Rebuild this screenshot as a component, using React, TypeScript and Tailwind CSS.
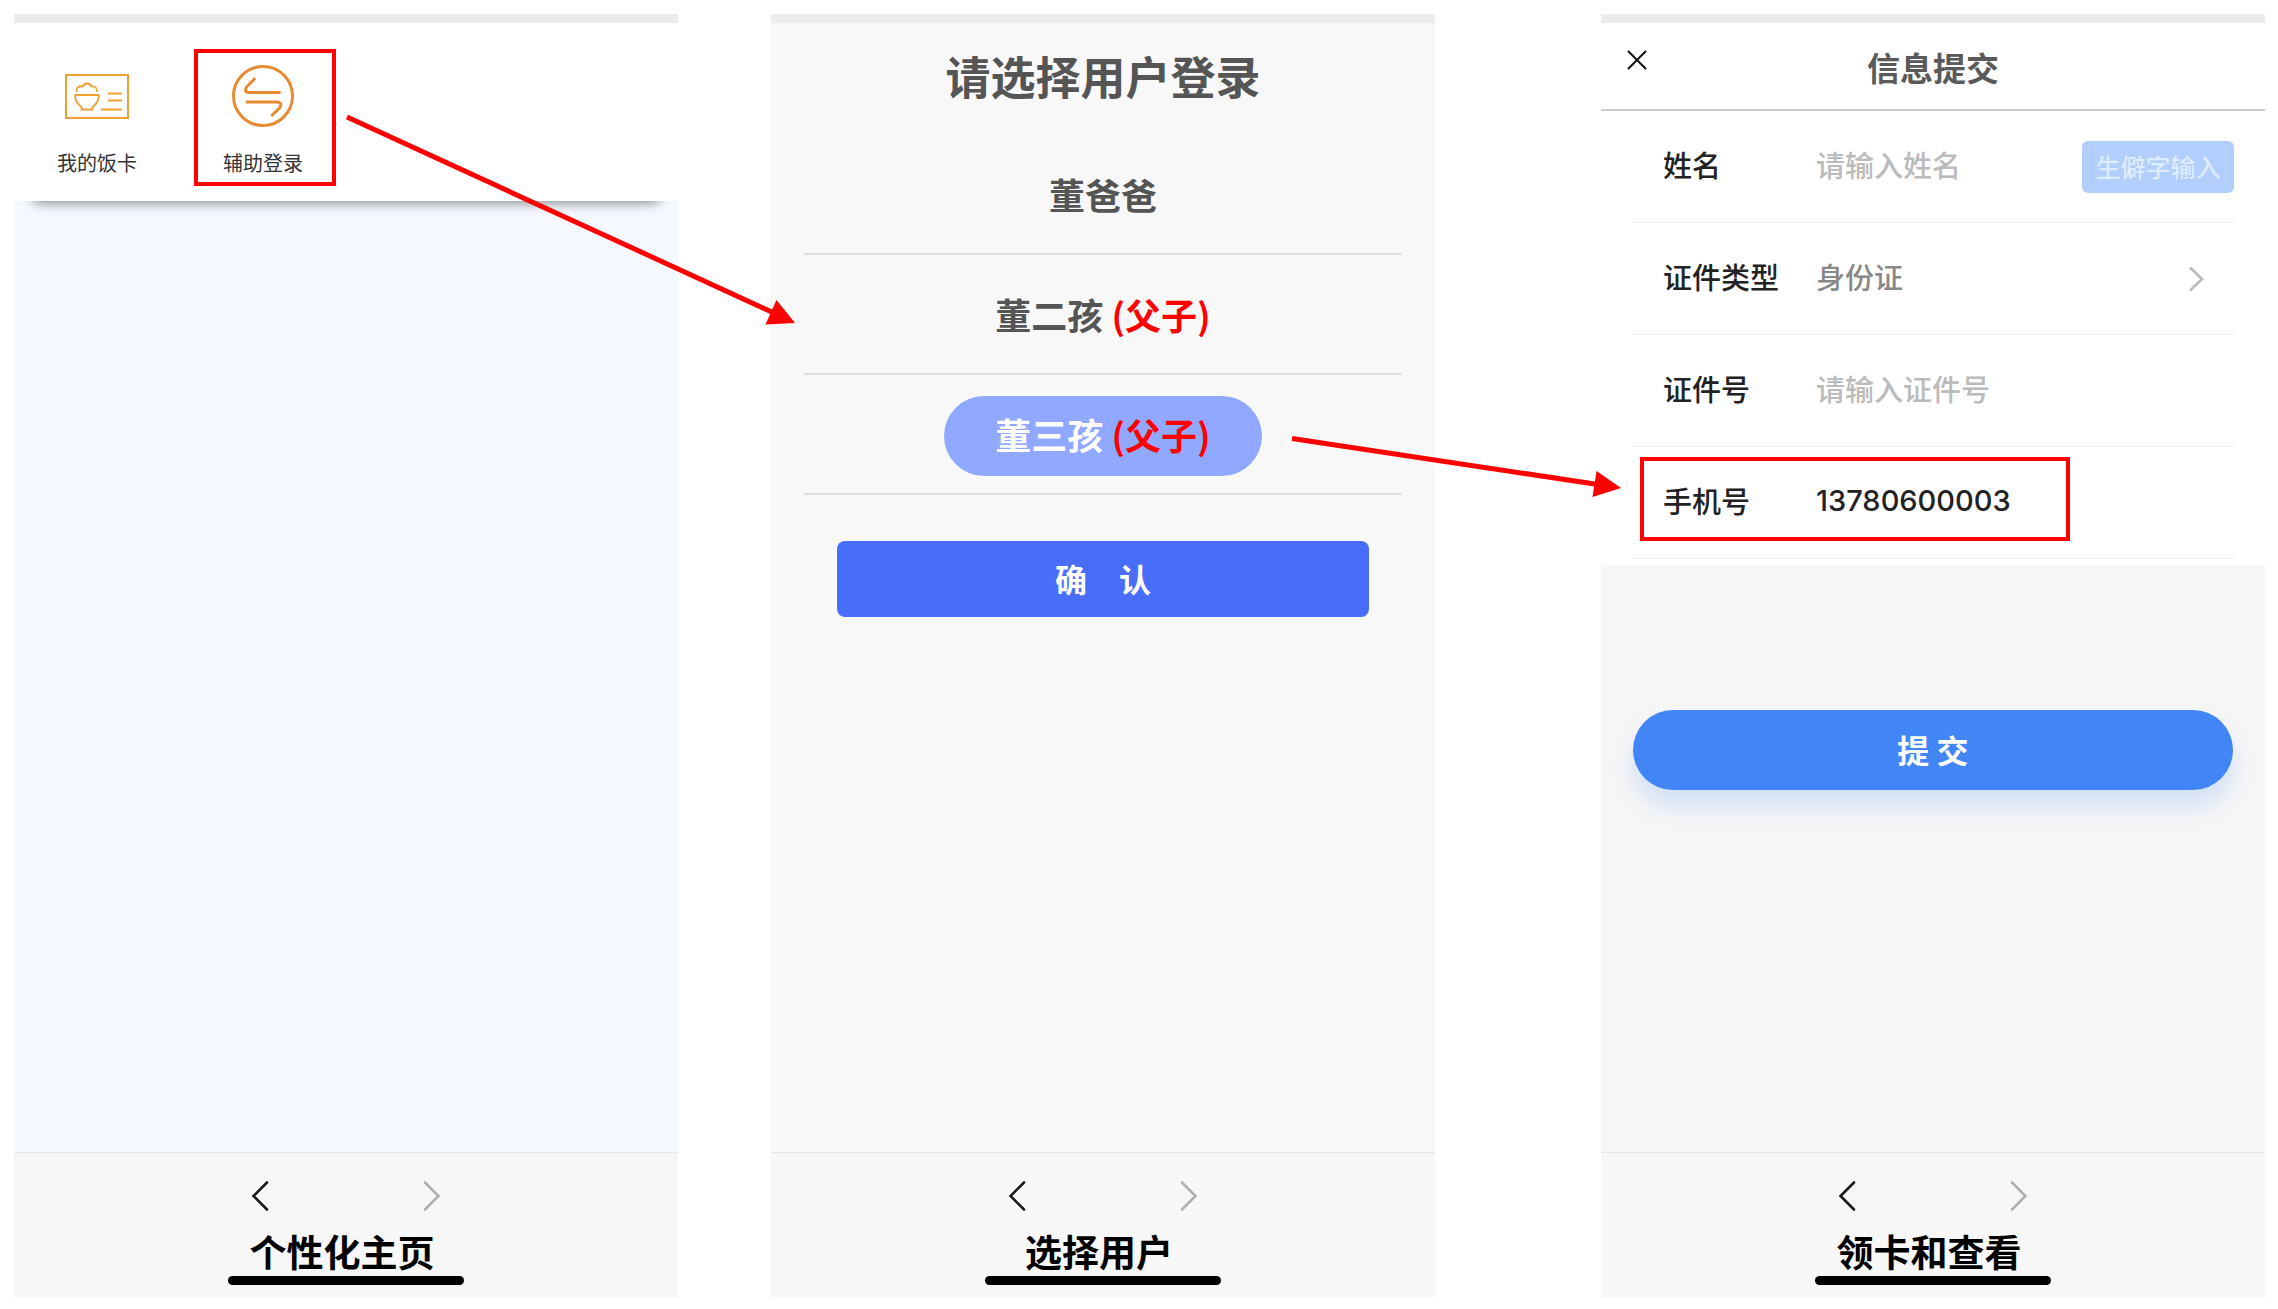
import React from 'react';

interface PhoneProps {
  caption: string;
  className?: string;
  children: React.ReactNode;
}

const Phone: React.FC<PhoneProps> = ({ caption, className = '', children }) => {
  return (
    <section className={`flex min-w-0 flex-1 flex-col ${className}`}>
      <div className="h-[9px] bg-[#ececec]" />
      <div className="flex flex-1 flex-col">{children}</div>
      <footer className="flex h-[146px] flex-col items-center border-t border-[#e6e6e6] bg-[#f7f7f7] pt-7">
        <nav className="flex gap-[154px]">
          <button type="button" aria-label="后退" className="text-[#1a1a1a]">
            <svg width="18" height="30" viewBox="0 0 18 30" fill="none" stroke="currentColor" strokeWidth="2.6" strokeLinecap="round">
              <path d="M16 1.5 2.5 15 16 28.5" />
            </svg>
          </button>
          <button type="button" aria-label="前进" className="text-[#b0b0b0]">
            <svg width="18" height="30" viewBox="0 0 18 30" fill="none" stroke="currentColor" strokeWidth="2.6" strokeLinecap="round">
              <path d="M2 1.5 15.5 15 2 28.5" />
            </svg>
          </button>
        </nav>
        <h2 className="mt-5 pr-2 text-[37px] leading-10 font-bold text-black">{caption}</h2>
        <div className="mt-[5px] h-[9px] w-[236px] rounded-full bg-black" />
      </footer>
    </section>
  );
};

const HomeScreen: React.FC = () => {
  return (
    <Phone caption="个性化主页">
      <div className="flex flex-1 flex-col bg-[#f5f8ff]">
        <div className="relative h-[178px]">
          <div className="absolute inset-x-4 bottom-0 h-8 rounded-xl shadow-[0_2px_12px_rgba(0,0,0,0.45)]" />
          <div className="relative grid h-full grid-cols-4 bg-white">
            <a href="#card" className="flex flex-col items-center pt-[42px] text-xl leading-7 text-[#333]">
              <svg width="64" height="62" viewBox="0 -9 64 62" fill="none" stroke="#f0a030" strokeWidth="1.8">
                <rect x="1" y="1" width="62" height="43" strokeWidth="2" />
                <path d="M9.5 21h25M10 21c0 6 2.5 9 6.500 12v2.500h11V33c4-3 6.500-6 6.500-12" />
                <path d="M11.500 18c-.5-4 2-6.500 6-5.500 1-2 2.500-3 4.500-3s3.500 1 4.500 3c4-.5 6 2 5.500 5.500" />
                <path d="M43 19.500h14M43 26.500h14M36 35.500h21" />
              </svg>
              <span className="mt-[22px]">我的饭卡</span>
            </a>
            <a href="#assist" className="relative flex flex-col items-center pt-[42px] text-xl leading-7 text-[#333]">
              <svg width="62" height="62" viewBox="0 0 62 62" fill="none" stroke="#e88b30" strokeWidth="3">
                <circle cx="31" cy="31" r="29.500" />
                <path d="M23.300 13 14.500 22q-2.500 5.500 2 5.500h32.200" />
                <path d="M14 37h31q5.500 0 3 5.500L39.300 51" />
              </svg>
              <span className="mt-[22px]">辅助登录</span>
              <span className="absolute top-[26px] left-[14px] h-[137px] w-[142px] border-4 border-[#ff0000]" />
            </a>
          </div>
        </div>
      </div>
    </Phone>
  );
};

const users = [
  { name: '董爸爸', relation: '', selected: false },
  { name: '董二孩', relation: '(父子)', selected: false },
  { name: '董三孩', relation: '(父子)', selected: true },
];

const SelectUserScreen: React.FC = () => {
  return (
    <Phone caption="选择用户" className="ml-[93px]">
      <div className="flex flex-1 flex-col bg-[#f8f8f8] px-[33px] text-[#555]">
        <h1 className="h-[112px] text-center text-[45px] leading-[106px] font-bold">请选择用户登录</h1>
        <ul>
          {users.map((user) => (
            <li key={user.name} className="flex h-[120px] items-center justify-center border-b-2 border-[#e0e0e0] pt-1">
              <button
                type="button"
                className={`h-20 w-[318px] rounded-full pb-1 text-[36px] font-bold ${user.selected ? 'bg-[#90a8ff] text-white' : ''}`}
              >
                {user.name}
                {user.relation && <span className="text-[#ff0000]"> {user.relation}</span>}
              </button>
            </li>
          ))}
        </ul>
        <button type="button" className="mx-[33px] mt-[46px] h-[76px] rounded-lg bg-[#486dfb] pb-0.5 text-[32px] font-bold text-white">
          确　认
        </button>
      </div>
    </Phone>
  );
};

const rowClass = 'flex h-28 items-center border-b border-[#ececec] pl-[31px]';
const labelClass = 'w-[153px] shrink-0 pb-1 font-medium text-[#222]';
const fieldClass = 'min-w-0 flex-1 bg-transparent pb-1 font-medium outline-none placeholder:text-[#bbb]';

const SubmitScreen: React.FC = () => {
  return (
    <Phone caption="领卡和查看" className="ml-[166px]">
      <form className="flex flex-1 flex-col bg-[#f6f6f6]" onSubmit={(e) => e.preventDefault()}>
        <header className="relative h-[88px] border-b-2 border-[#ccc] bg-white">
          <button type="button" aria-label="关闭" className="absolute top-[27px] left-[26px]">
            <svg width="20" height="20" viewBox="0 0 20 20" stroke="#111" strokeWidth="2" strokeLinecap="round">
              <path d="M1.500 1.500 18.500 18.500M18.500 1.500 1.500 18.500" />
            </svg>
          </button>
          <h1 className="text-center text-[33px] leading-[88px] font-bold text-[#5a5a5a]">信息提交</h1>
        </header>
        <div className="bg-white px-[31px] pb-[6px] text-[29px]">
          <div className={rowClass}>
            <label htmlFor="name" className={labelClass}>姓名</label>
            <input id="name" placeholder="请输入姓名" className={fieldClass} />
            <button type="button" className="h-[52px] w-[152px] rounded-md bg-[#b2cefc] text-[25px] font-medium text-[#dfebff]">
              生僻字输入
            </button>
          </div>
          <div className={rowClass}>
            <label htmlFor="idType" className={labelClass}>证件类型</label>
            <select id="idType" className={`appearance-none text-[#888] ${fieldClass}`}>
              <option>身份证</option>
            </select>
            <svg className="mr-[30px]" width="16" height="26" viewBox="0 0 16 26" fill="none" stroke="#bbb" strokeWidth="2.600">
              <path d="M2 1.500 14 13 2 24.500" />
            </svg>
          </div>
          <div className={rowClass}>
            <label htmlFor="idNumber" className={labelClass}>证件号</label>
            <input id="idNumber" placeholder="请输入证件号" className={fieldClass} />
          </div>
          <div className={`relative ${rowClass}`}>
            <label htmlFor="phone" className={labelClass}>手机号</label>
            <input id="phone" type="tel" defaultValue="13780600003" className="min-w-0 flex-1 bg-transparent pb-1 font-[Inter] font-medium text-[#222] outline-none" />
            <span className="pointer-events-none absolute top-[10px] left-2 h-[84px] w-[430px] border-4 border-[#ff0000]" />
          </div>
        </div>
        <button
          type="submit"
          className="mx-8 mt-[145px] h-20 rounded-full bg-[#4285f6] pb-0.5 text-[32px] font-bold text-white shadow-[0_16px_24px_rgba(66,133,246,0.2)]"
        >
          提 交
        </button>
      </form>
    </Phone>
  );
};

export default function App() {
  return (
    <main className="relative flex h-screen bg-white pt-3.5 pr-[13px] pb-[11px] pl-3.5 font-['Noto_Sans_CJK_SC',sans-serif]">
      <HomeScreen />
      <SelectUserScreen />
      <SubmitScreen />
      {/* Flow arrows between the screens */}
      <svg className="pointer-events-none absolute inset-0 h-full w-full" viewBox="0 0 2278 1309" fill="#ff0000" stroke="none">
        <path d="M347 117 774 313" stroke="#ff0000" strokeWidth="5" />
        <path d="M776.500 300 795 323 765.500 324.500Z" />
        <path d="M1292 438.500 1598 484.500" stroke="#ff0000" strokeWidth="5" />
        <path d="M1596.500 471 1621 488 1592.500 497Z" />
      </svg>
    </main>
  );
}
